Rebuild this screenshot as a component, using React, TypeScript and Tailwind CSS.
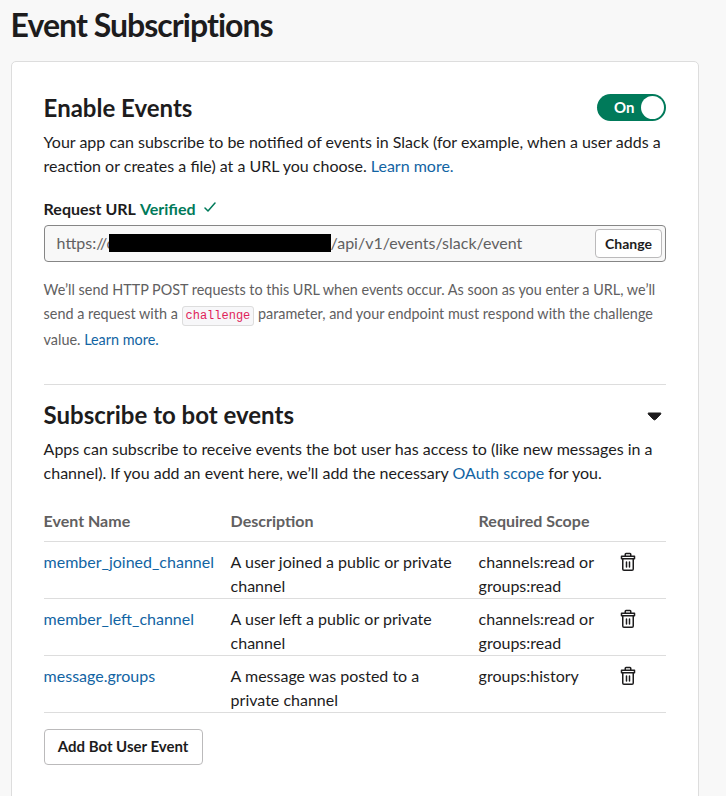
import React from "react";

const events = [
  { name: "member_joined_channel", desc: ["A user joined a public or private", "channel"], scope: ["channels:read or", "groups:read"] },
  { name: "member_left_channel", desc: ["A user left a public or private", "channel"], scope: ["channels:read or", "groups:read"] },
  { name: "message.groups", desc: ["A message was posted to a", "private channel"], scope: ["groups:history"] },
];

function Lines({ items }: { items: string[] }) {
  return (
    <>
      {items.map((t) => (
        <div key={t} className="whitespace-nowrap">{t}</div>
      ))}
    </>
  );
}

function Trash() {
  return (
    <svg width="20" height="20" viewBox="0 0 20 20" fill="none" stroke="#1d1c1d" strokeWidth="1.5" strokeLinecap="round" strokeLinejoin="round">
      <path d="M3.5 4.25h13v2.5h-13zM7.25 4v-1.75q0-.75.75-.75h4q.75 0 .75.75V4M4.75 7v10q0 1.25 1.25 1.25h8q1.25 0 1.25-1.25V7M8.5 10v5M11.5 10v5" />
    </svg>
  );
}

export default function App() {
  return (
    <div className="h-[796px] w-[726px] overflow-hidden bg-[#f8f8f8] pl-[11px] font-[Lato,sans-serif] text-base leading-6 text-[#1d1c1d]">
      <h1 className="-ml-[0.4px] h-[61px] pt-1 text-[32px] leading-[42px] font-bold tracking-[-0.96px]">Event Subscriptions</h1>
      <main className="h-[760px] w-[688px] rounded-[5px] border border-[#dddddd] bg-white pt-[30px] pr-8 pl-[31.6px]">
        <div className="flex h-8 items-start justify-between">
          <h2 className="text-2xl leading-8 font-bold">Enable Events</h2>
          <div className="mt-[2px] flex h-[27px] w-[69px] items-center justify-between rounded-full bg-[#007a5a] pr-[2px] pl-[17px] text-[15px] font-bold text-white">
            <span className="pb-[2px]">On</span><span className="size-[23px] rounded-full bg-white" />
          </div>
        </div>
        <div className="mt-[6px] whitespace-nowrap">
          <p>Your app can subscribe to be notified of events in Slack (for example, when a user adds a</p>
          <p>reaction or creates a file) at a URL you choose. <a className="text-[#1264a3]">Learn more.</a></p>
        </div>
        <div className="mt-[19px] flex h-6 font-bold">
          Request URL<span className="ml-1 text-[#007a5a]">Verified</span>
          <svg className="mt-1 ml-2" width="12" height="12" viewBox="0 0 12 12" fill="none" stroke="#007a5a" strokeWidth="1.5" strokeLinecap="round" strokeLinejoin="round"><path d="M1 7l3 3L11 2" /></svg>
        </div>
        <div className="mt-1 flex h-[37px] items-center rounded border border-[#868686] bg-[#f8f8f8] pr-[3px] pl-3 text-[#616061]">
          <span className="w-[52px] pb-[2px] whitespace-nowrap">https://c</span>
          <span className="relative mb-px h-[18px] w-[222px] bg-black" />
          <span className="pb-[2px]">/api/v1/events/slack/event</span>
          <button className="ml-auto h-[29px] w-[67px] rounded border border-[#bbbabb] bg-white text-[14px] font-bold text-[#1d1c1d]">Change</button>
        </div>
        <div className="mt-4 text-[14.4px] whitespace-nowrap text-[#616061]">
          <p>We’ll send HTTP POST requests to this URL when events occur. As soon as you enter a URL, we’ll</p>
          <p className="h-[26px]">send a request with a <code className="rounded-[3px] border border-[#dddddd] bg-[#f7f7f9] px-[3px] py-[2px] font-['Liberation_Mono',monospace] text-[12px] text-[#e01e5a]">challenge</code> parameter, and your endpoint must respond with the challenge</p>
          <p>value. <a className="text-[#1264a3]">Learn more.</a></p>
        </div>
        <hr className="mt-8 border-[#dddddd]" />
        <div className="mt-[14px] flex h-8 items-center justify-between">
          <h2 className="text-2xl leading-8 font-bold">Subscribe to bot events</h2>
          <svg className="mt-[3px] mr-1" width="15" height="9" viewBox="0 0 15 9"><path d="M1.5 1h12q.8.3.3 1L8.5 7.5q-1 .8-2 0L1.2 2q-.5-.7.3-1z" fill="#1d1c1d" stroke="#1d1c1d" strokeLinejoin="round" /></svg>
        </div>
        <div className="mt-[6px] whitespace-nowrap">
          <p>Apps can subscribe to receive events the bot user has access to (like new messages in a</p>
          <p>channel). If you add an event here, we’ll add the necessary <a className="text-[#1264a3]">OAuth scope</a> for you.</p>
        </div>
        <div className="mt-6 grid h-[33px] grid-cols-[187px_248px_1fr] border-b border-[#dddddd] font-bold text-[#616061]">
          <span>Event Name</span><span>Description</span><span>Required Scope</span>
        </div>
        {events.map((e) => (
          <div key={e.name} className="grid h-[57px] grid-cols-[187px_248px_139px_1fr] border-b border-[#dddddd] pt-2">
            <a className="text-[#1264a3]">{e.name}</a>
            <div><Lines items={e.desc} /></div>
            <div><Lines items={e.scope} /></div>
            <div className="pt-[2px]"><Trash /></div>
          </div>
        ))}
        <button className="mt-4 h-9 w-[159px] rounded border border-[#bbbabb] bg-white pb-[3px] text-[15px] font-bold">Add Bot User Event</button>
      </main>
    </div>
  );
}
